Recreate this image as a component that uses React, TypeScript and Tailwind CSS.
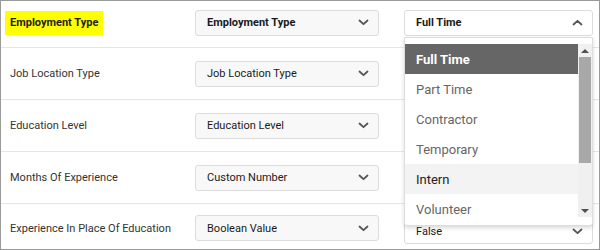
import React from "react";

const Chevron = ({ up = false }: { up?: boolean }) => (
  <svg width="11" height="7" viewBox="0 0 11 7" className="shrink-0">
    <path
      d={up ? "M1.5 5.5 L5.5 1.8 L9.5 5.5" : "M1.5 1.5 L5.5 5.2 L9.5 1.5"}
      fill="none"
      stroke="#555"
      strokeWidth="1.8"
      strokeLinecap="round"
      strokeLinejoin="round"
    />
  </svg>
);

const Select = ({
  text,
  w = "w-[184px]",
  white = false,
  up = false,
  bold = false,
}: {
  text: string;
  w?: string;
  white?: boolean;
  up?: boolean;
  bold?: boolean;
}) => (
  <div
    className={`${w} h-[26px] rounded-[3px] border border-[#dcdcdc] ${white ? "bg-white" : "bg-[#f8f8f8]"} flex items-center justify-between pl-[11px] pr-[9px]`}
  >
    <span className={`text-[11px] leading-none ${bold ? "font-bold" : "font-normal"} text-[#1a1a1a]`}>{text}</span>
    <Chevron up={up} />
  </div>
);

const rows = [
  { label: "Employment Type", sel: "Employment Type", h: "h-[47px]" },
  { label: "Job Location Type", sel: "Job Location Type", h: "h-[52px]" },
  { label: "Education Level", sel: "Education Level", h: "h-[52px]" },
  { label: "Months Of Experience", sel: "Custom Number", h: "h-[52px]" },
  { label: "Experience In Place Of Education", sel: "Boolean Value", h: "h-[46px]" },
];

const items = ["Full Time", "Part Time", "Contractor", "Temporary", "Intern", "Volunteer"];

export default function App() {
  return (
    <div
      className="relative w-[600px] h-[250px] border border-[#9a9a9a] bg-white overflow-hidden"
      style={{ fontFamily: "Roboto, 'Liberation Sans', sans-serif" }}
    >
      {rows.map((r, i) => (
        <div
          key={i}
          className={`${r.h} flex items-center ${i < 4 ? "border-b border-[#e6e6e6]" : ""} ${i === 0 ? "pb-[3px]" : ""} ${i === 4 ? "pt-[2px]" : ""}`}
        >
          <div className="w-[194px] pl-[4px] flex items-center text-[11px] leading-none">
            {i === 0 ? (
              <span className="bg-[#ffff00] px-[5px] py-[6.5px] font-bold text-[#222]">{r.label}</span>
            ) : (
              <span className="pl-[5px] text-[#333]">{r.label}</span>
            )}
          </div>
          <Select text={r.sel} bold={i === 0} />
          <div className="ml-[25px]">
            {i === 0 && <Select text="Full Time" w="w-[189px]" white up bold />}
            {i === 3 && <Select text="" w="w-[189px]" white />}
            {i === 4 && (
              <div className="mt-[6px]">
                <Select text="False" w="w-[189px]" white />
              </div>
            )}
          </div>
        </div>
      ))}

      {/* dropdown */}
      <div className="absolute left-[403px] top-[36px] w-[189px] h-[189px] bg-white border border-[#dcdcdc] rounded-b-[3px] shadow-[0_2px_4px_rgba(0,0,0,0.15)] pt-[6px]">
        <div className="relative flex">
          <div className="w-[173px]">
            {items.map((it, i) => (
              <div
                key={it}
                className={`h-[30px] flex items-center pl-[11px] text-[13px] leading-none ${
                  i === 0
                    ? "bg-[#666666] text-white font-bold"
                    : i === 4
                    ? "bg-[#f3f3f3] text-[#222]"
                    : "text-[#666]"
                }`}
              >
                {it}
              </div>
            ))}
          </div>
          <div className="w-[14px] h-[173px] bg-[#f0f0f0] flex flex-col items-center">
            <div className="h-[13px] w-full flex items-center justify-center">
              <div className="w-0 h-0 border-l-[4px] border-r-[4px] border-b-[4px] border-l-transparent border-r-transparent border-b-[#505050]" />
            </div>
            <div className="w-[12px] h-[106px] bg-[#a8a8a8]" />
            <div className="flex-1" />
            <div className="h-[13px] w-full flex items-center justify-center">
              <div className="w-0 h-0 border-l-[4px] border-r-[4px] border-t-[4px] border-l-transparent border-r-transparent border-t-[#505050]" />
            </div>
          </div>
        </div>
      </div>
    </div>
  );
}
